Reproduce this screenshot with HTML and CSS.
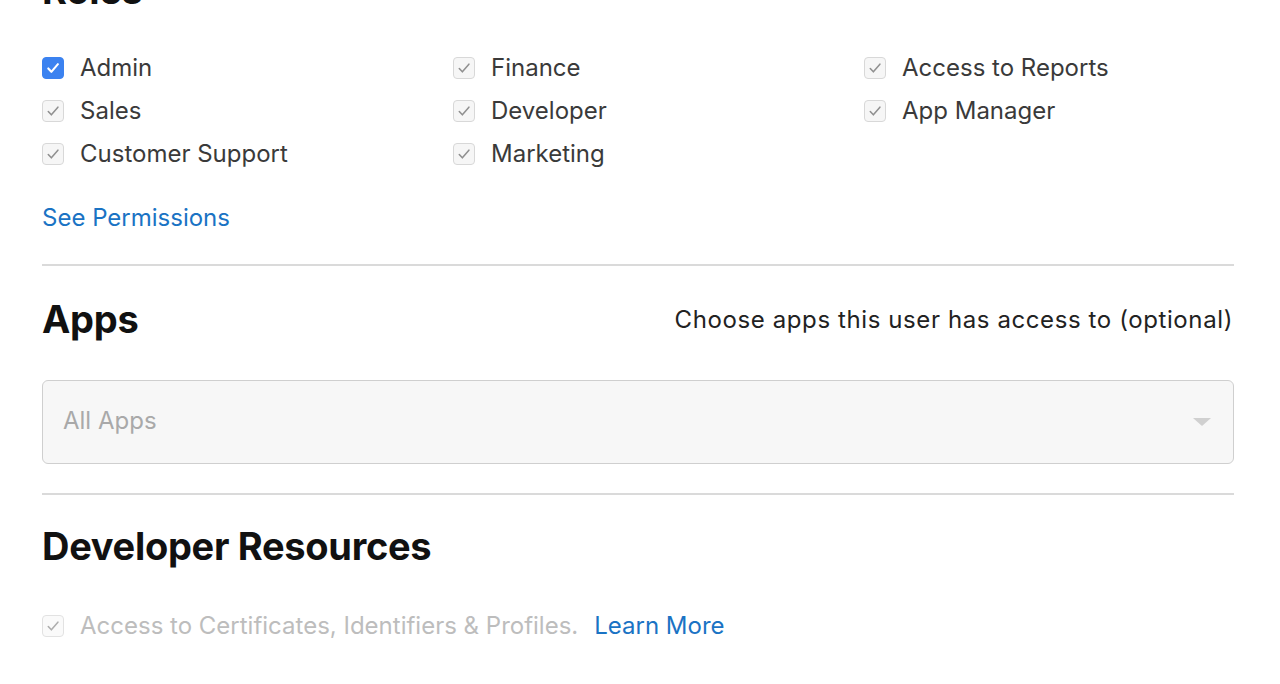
FILE: index.html
```html
<!DOCTYPE html>
<html lang="en">
<head>
    <meta charset="UTF-8">
    <meta name="viewport" content="width=device-width, initial-scale=1.0">
    <title>Edit User - Roles</title>
    <link rel="stylesheet" href="styles.css">
</head>
<body>
    <div class="container">
        <h2 class="section-title">Roles</h2>

        <div class="roles-grid">
            <label class="check-row">
                <span class="box active">
                    <svg viewBox="0 0 22 22"><path d="M5.8 11.5l3.4 3.7L16.4 6.8" /></svg>
                </span>
                Admin
            </label>
            <label class="check-row">
                <span class="box"><svg viewBox="0 0 22 22"><path d="M5.8 11.5l3.4 3.7L16.4 6.8" /></svg></span>
                Finance
            </label>
            <label class="check-row">
                <span class="box"><svg viewBox="0 0 22 22"><path d="M5.8 11.5l3.4 3.7L16.4 6.8" /></svg></span>
                Access to Reports
            </label>
            <label class="check-row">
                <span class="box"><svg viewBox="0 0 22 22"><path d="M5.8 11.5l3.4 3.7L16.4 6.8" /></svg></span>
                Sales
            </label>
            <label class="check-row">
                <span class="box"><svg viewBox="0 0 22 22"><path d="M5.8 11.5l3.4 3.7L16.4 6.8" /></svg></span>
                Developer
            </label>
            <label class="check-row">
                <span class="box"><svg viewBox="0 0 22 22"><path d="M5.8 11.5l3.4 3.7L16.4 6.8" /></svg></span>
                App Manager
            </label>
            <label class="check-row">
                <span class="box"><svg viewBox="0 0 22 22"><path d="M5.8 11.5l3.4 3.7L16.4 6.8" /></svg></span>
                Customer Support
            </label>
            <label class="check-row">
                <span class="box"><svg viewBox="0 0 22 22"><path d="M5.8 11.5l3.4 3.7L16.4 6.8" /></svg></span>
                Marketing
            </label>
        </div>

        <a class="link permissions-link" href="#">See Permissions</a>

        <hr class="divider">

        <div class="section-head">
            <h2 class="section-title">Apps</h2>
            <span class="section-hint">Choose apps this user has access to (optional)</span>
        </div>

        <div class="select-box">
            <span class="placeholder">All Apps</span>
            <span class="arrow"></span>
        </div>

        <hr class="divider">

        <h2 class="section-title resources-title">Developer Resources</h2>

        <div class="check-row disabled resources-row">
            <span class="box"><svg viewBox="0 0 22 22"><path d="M5.8 11.5l3.4 3.7L16.4 6.8" /></svg></span>
            Access to Certificates, Identifiers &amp; Profiles.
            <a class="link learn-more" href="#">Learn More</a>
        </div>
    </div>
</body>
</html>
```

FILE: styles.css
```css
body {
    font-family: Inter, "Liberation Sans", Arial, sans-serif;
    background-color: #ffffff;
    color: #333;
    margin: 0;
    padding: 0;
}

.container {
    margin-top: -33px;
    padding: 0 46px 0 42px;
}

.section-title {
    margin: 0;
    font-size: 38px;
    line-height: 46px;
    font-weight: 700;
    color: #111;
    letter-spacing: -0.3px;
}

.roles-grid {
    display: grid;
    grid-template-columns: 411px 411px 1fr;
    grid-auto-rows: 43px;
    margin-top: 33px;
}

.check-row {
    display: flex;
    align-items: center;
    gap: 16px;
    font-size: 24px;
    color: #3a3a3a;
}

.box {
    width: 20px;
    height: 20px;
    border: 1px solid #d8d8d8;
    border-radius: 4px;
    background-color: #f6f6f6;
    flex-shrink: 0;
}

.box svg {
    display: block;
    width: 20px;
    height: 20px;
    fill: none;
    stroke: #909090;
    stroke-width: 1.7;
    stroke-linecap: round;
    stroke-linejoin: round;
}

.box.active {
    background-color: #3b82f0;
    border-color: #3b82f0;
}

.box.active svg {
    stroke: #fff;
    stroke-width: 2.3;
}

.link {
    color: #1a73c4;
    text-decoration: none;
    font-size: 24px;
}

.permissions-link {
    display: block;
    line-height: 30px;
    margin-top: 28px;
}

.divider {
    border: none;
    border-top: 2px solid #dadada;
    margin: 31px 0 0 0;
}

.section-head {
    display: flex;
    justify-content: space-between;
    align-items: center;
    margin-top: 30px;
}

.section-hint {
    font-size: 24px;
    letter-spacing: 0.6px;
    color: #222;
    padding-right: 1px;
}

.select-box {
    display: flex;
    align-items: center;
    justify-content: space-between;
    height: 82px;
    margin-top: 38px;
    padding: 0 22px 3px 20px;
    box-sizing: border-box;
    height: 84px;
    border: 1px solid #cfcfcf;
    border-radius: 6px;
    background-color: #f7f7f7;
}

.select-box + .divider {
    margin-top: 29px;
}

.placeholder {
    font-size: 24px;
    color: #a9a9a9;
}

.arrow {
    width: 0;
    height: 0;
    margin-top: 3px;
    border-left: 9px solid transparent;
    border-right: 9px solid transparent;
    border-top: 8px solid #d0d0d0;
}

.resources-title {
    margin-top: 28px;
}

.resources-row {
    height: 43px;
    margin-top: 35px;
}

.check-row.disabled {
    color: #bdbdbd;
}

.check-row.disabled .box {
    border-color: #e2e2e2;
    background-color: #fafafa;
}

.check-row.disabled .box svg {
    stroke: #adadad;
}
```
